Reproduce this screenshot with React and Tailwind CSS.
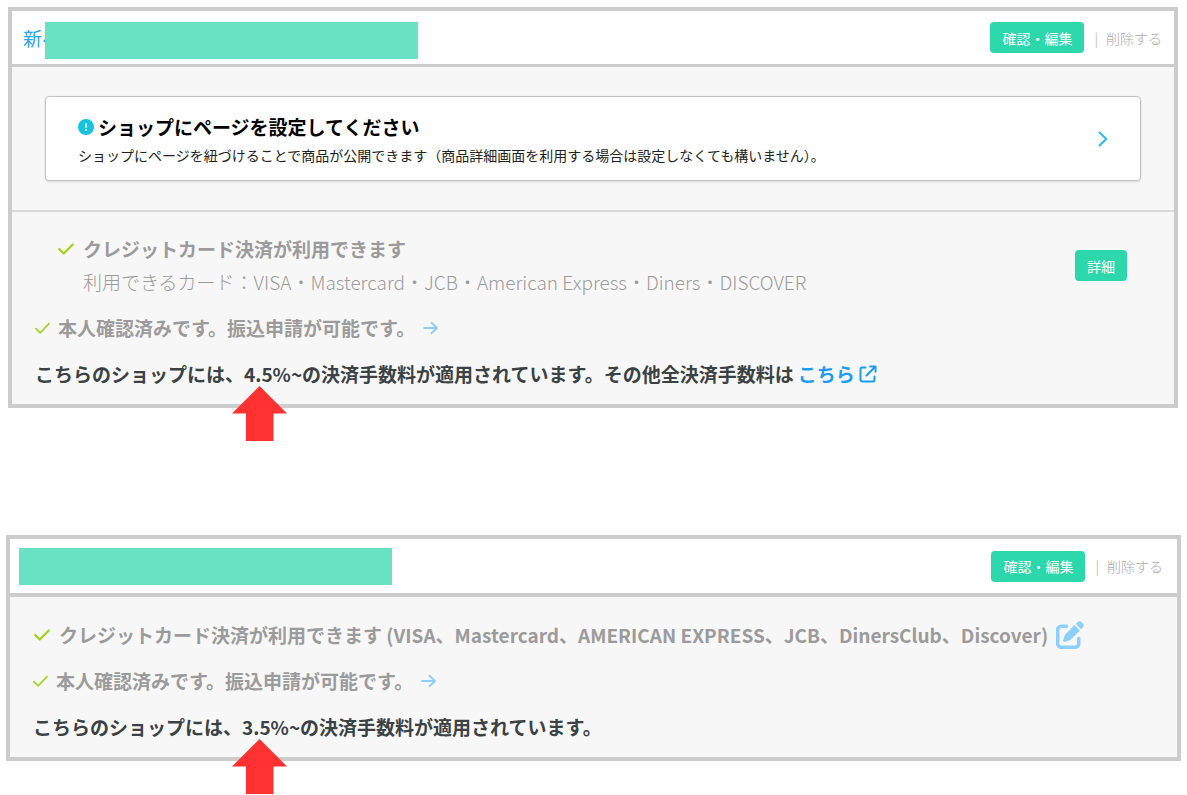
import React from "react";
import { FaCheck, FaCircleExclamation, FaPenToSquare } from "react-icons/fa6";

function ThinCheck() {
  return (
    <svg viewBox="0 0 15 15" className="size-[15px] shrink-0 text-[#a6d42c]" fill="none" stroke="currentColor" strokeWidth="1.8" strokeLinecap="round" strokeLinejoin="round">
      <path d="M1 7.7 5.2 11.8 14 2.7" />
    </svg>
  );
}

function ArrowRight() {
  return (
    <svg viewBox="0 0 15 15" className="size-[15px]" fill="none" stroke="currentColor" strokeWidth="1.9" strokeLinecap="round" strokeLinejoin="round">
      <path d="M1 7h13M8.5 1.8 14 7l-5.5 5.2" />
    </svg>
  );
}

function ExternalIcon() {
  return (
    <svg viewBox="0 0 18 18" className="size-[18px]" fill="none" stroke="currentColor" strokeWidth="2" strokeLinecap="round" strokeLinejoin="round">
      <path d="M6.5 2.5H3.2a1.7 1.7 0 0 0-1.7 1.7v10.6a1.7 1.7 0 0 0 1.7 1.7h10.6a1.7 1.7 0 0 0 1.7-1.7v-3.3" />
      <path d="M11.2 1.5h5.3v5.3M16.2 1.8 7.5 10.5" />
    </svg>
  );
}

// red pointer under the fee rate
function Pointer({ className }) {
  return (
    <svg viewBox="0 0 55 55" className={`absolute -bottom-[37px] size-[55px] ${className}`} fill="#ff3131">
      <path d="M27.5 0 55 27.5H41.5V55H14V27.5H0z" />
    </svg>
  );
}

function GreenButton({ children }) {
  return (
    <button type="button" className="h-[31px] rounded bg-[#2cd7ac] px-3 text-sm text-white">
      {children}
    </button>
  );
}

function HeaderActions() {
  return (
    <div className="ml-auto flex items-center text-sm text-[#aaaaaa]">
      <GreenButton>確認・編集</GreenButton>
      <span className="ml-2.5 font-light">|</span>
      <button type="button" className="ml-2 font-light">削除する</button>
    </div>
  );
}

function Verified() {
  return (
    <p className="flex items-center gap-2 font-bold text-[#9b9b9b]">
      <ThinCheck />
      <span>本人確認済みです。振込申請が可能です。</span>
      <a href="#transfer" aria-label="振込申請" className="text-[#8ccfff]">
        <ArrowRight />
      </a>
    </p>
  );
}

export default function App() {
  return (
    <main
      lang="ja"
      className="flex flex-col gap-[127px] px-1.5 pt-[7px] pb-[34px] text-[19px] leading-7 text-[#3a4245] [font-family:'Noto_Sans_CJK_JP',sans-serif]"
    >
      <section className="relative mr-[3px] ml-0.5 border-4 border-[#cccccc] bg-[#f7f7f7]">
        <header className="flex h-14 items-center border-b-3 border-[#cccccc] bg-white pr-3 pl-[11px]">
          <div className="relative">
            <a href="#shop" className="text-[#2ba4e8]">新ペ</a>
            <span className="absolute -top-0.5 left-[22px] h-[37px] w-[373px] bg-[#69e2c4]" />
          </div>
          <HeaderActions />
        </header>

        <div className="border-b-2 border-[#dadada] px-[33px] py-[29px]">
          <a
            href="#page-setting"
            className="flex h-[85px] items-center justify-between rounded border border-[#c4c4c4] bg-white px-8 shadow-sm"
          >
            <div>
              <h2 className="flex items-center gap-1 font-bold text-black">
                <FaCircleExclamation className="size-4 text-[#17c3de]" />
                ショップにページを設定してください
              </h2>
              <p className="mt-1 text-sm text-[#222222]">
                ショップにページを紐づけることで商品が公開できます（商品詳細画面を利用する場合は設定しなくても構いません）。
              </p>
            </div>
            <svg viewBox="0 0 10 16" className="h-4 w-2.5 shrink-0 text-[#29b9f7]" fill="none" stroke="currentColor" strokeWidth="2" strokeLinecap="round" strokeLinejoin="round">
              <path d="M1.5 1.5 8.3 8l-6.8 6.5" />
            </svg>
          </a>
        </div>

        <div className="flex items-start justify-between pt-5 pr-[47px] pl-[45px]">
          <div className="flex gap-2 leading-[33px] text-[#9b9b9b]">
            <FaCheck className="mt-2 size-[18px] shrink-0 text-[#a1d119]" />
            <div>
              <h3 className="font-bold">クレジットカード決済が利用できます</h3>
              <p className="font-light">
                利用できるカード：VISA・Mastercard・JCB・American Express・Diners・DISCOVER
              </p>
            </div>
          </div>
          <div className="flex pt-[18px]">
            <GreenButton>詳細</GreenButton>
          </div>
        </div>

        <div className="flex flex-col gap-[18px] px-[23px] py-4">
          <Verified />
          <p className="flex items-center gap-1 font-bold">
            <span>こちらのショップには、4.5%~の決済手数料が適用されています。その他全決済手数料は</span>
            <a href="#fees" className="flex items-center gap-1 text-[#1c9cf3]">
              こちら
              <ExternalIcon />
            </a>
          </p>
        </div>
        <Pointer className="left-[220px]" />
      </section>

      <section className="relative border-4 border-[#cccccc] bg-[#f7f7f7]">
        <header className="flex h-[58px] items-center border-b-4 border-[#cccccc] bg-white pr-3.5 pl-[9px]">
          <span className="h-[37px] w-[373px] bg-[#69e2c4]" />
          <HeaderActions />
        </header>

        <div className="flex flex-col gap-[18px] px-[23px] pt-6 pb-4">
          <p className="flex items-center gap-2 font-bold text-[#9b9b9b]">
            <FaCheck className="size-[18px] shrink-0 text-[#a1d119]" />
            <span>
              クレジットカード決済が利用できます (VISA、Mastercard、AMERICAN EXPRESS、JCB、DinersClub、Discover)
            </span>
            <a href="#cards" aria-label="編集" className="text-[#8ccfff]">
              <FaPenToSquare className="size-7" />
            </a>
          </p>
          <Verified />
          <p className="font-bold">こちらのショップには、3.5%~の決済手数料が適用されています。</p>
        </div>
        <Pointer className="left-[222px]" />
      </section>
    </main>
  );
}
